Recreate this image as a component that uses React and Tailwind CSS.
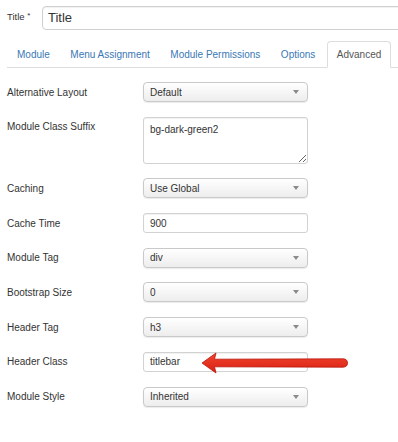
import React from "react";

const font = { fontFamily: '"Liberation Sans", Arial, Helvetica, sans-serif' };

function Caret() {
  return (
    <svg width="6" height="4" viewBox="0 0 6 4" className="shrink-0">
      <path d="M0 0 L6 0 L3 4 Z" fill="#8a8a8a" />
    </svg>
  );
}

function Select({ value }) {
  return (
    <div className="w-[165px] h-[20px] rounded-[4px] border border-[#c9c9c9] bg-gradient-to-b from-[#ffffff] to-[#ededed] shadow-[0_1px_1px_rgba(0,0,0,0.08)] flex items-center justify-between pl-[6px] pr-[8px] text-[10px] text-[#333]">
      <span>{value}</span>
      <Caret />
    </div>
  );
}

function Input({ value }) {
  return (
    <div className="w-[165px] h-[20px] rounded-[3px] border border-[#d2d2d2] bg-white shadow-[inset_0_1px_1px_rgba(0,0,0,0.06)] flex items-center pl-[6px] text-[10px] text-[#333]">
      {value}
    </div>
  );
}

function Row({ label, children, extra }) {
  return (
    <div className="relative flex items-start">
      <div className="w-[136px] shrink-0 h-[20px] flex items-center text-[10px] text-[#333]">{label}</div>
      {children}
      {extra}
    </div>
  );
}

function Arrow() {
  return (
    <svg
      width="156"
      height="28"
      viewBox="0 0 156 28"
      className="absolute left-[188px] top-[-3px] pointer-events-none"
    >
      <defs>
        <linearGradient id="ar" x1="0" y1="0" x2="0" y2="1">
          <stop offset="0" stopColor="#f2452f" />
          <stop offset="1" stopColor="#d81f12" />
        </linearGradient>
      </defs>
      <path
        d="M7 14 L21 4 L19.5 10.2 L148 9.8 Q152.5 10 152.5 14 Q152.5 18 148 18.2 L19.5 17.8 L21 24 Z"
        fill="url(#ar)"
        stroke="#b8180d"
        strokeWidth="0.8"
        strokeLinejoin="round"
      />
    </svg>
  );
}

export default function App() {
  const tabs = ["Module", "Menu Assignment", "Module Permissions", "Options"];
  return (
    <div className="w-[398px] h-[442px] bg-white overflow-hidden" style={font}>
      {/* Title row */}
      <div className="flex items-center pt-[6px] pl-[7px]">
        <div className="w-[35px] shrink-0 whitespace-nowrap text-[9.5px] text-[#333] -mt-[2px]">
          Title <span className="align-top text-[8px]">*</span>
        </div>
        <div className="h-[24px] w-[400px] shrink-0 rounded-[4px] border border-[#d0d0d0] bg-white shadow-[inset_0_1px_1px_rgba(0,0,0,0.06)] flex items-center pl-[5px] text-[13px] text-[#333]">
          Title
        </div>
      </div>

      {/* Tabs */}
      <div className="mt-[11px] ml-[7px] flex items-end border-b border-[#dddddd] h-[27px]">
        {tabs.map((t) => (
          <div
            key={t}
            className="h-[26px] px-[10px] mr-[0.5px] flex items-center text-[10px] text-[#3a78b5] whitespace-nowrap"
          >
            {t}
          </div>
        ))}
        <div className="h-[27px] -mb-[1px] ml-[1px] px-[9px] flex items-center text-[10px] text-[#555] bg-white border border-[#dddddd] border-b-transparent rounded-t-[4px]">
          Advanced
        </div>
      </div>

      {/* Form */}
      <div className="pl-[7px] pt-[14px] flex flex-col gap-[14.7px]">
        <Row label="Alternative Layout">
          <Select value="Default" />
        </Row>
        <Row label="Module Class Suffix">
          <textarea
            readOnly
            defaultValue="bg-dark-green2"
            className="w-[165px] h-[47px] rounded-[3px] border border-[#d2d2d2] bg-white shadow-[inset_0_1px_1px_rgba(0,0,0,0.06)] px-[6px] pt-[4px] text-[10px] text-[#333] outline-none"
            style={font}
          />
        </Row>
        <Row label="Caching">
          <Select value="Use Global" />
        </Row>
        <Row label="Cache Time">
          <Input value="900" />
        </Row>
        <Row label="Module Tag">
          <Select value="div" />
        </Row>
        <Row label="Bootstrap Size">
          <Select value="0" />
        </Row>
        <Row label="Header Tag">
          <Select value="h3" />
        </Row>
        <Row label="Header Class" extra={<Arrow />}>
          <Input value="titlebar" />
        </Row>
        <Row label="Module Style">
          <Select value="Inherited" />
        </Row>
      </div>
    </div>
  );
}
